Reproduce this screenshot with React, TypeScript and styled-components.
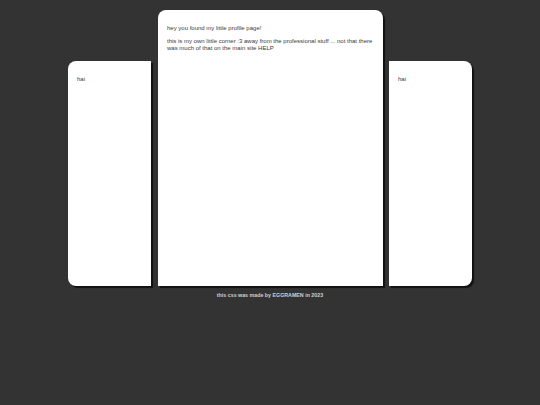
import styled, { createGlobalStyle } from "styled-components";

const GlobalStyle = createGlobalStyle`
  html, body {
    margin: 0;
    padding: 0;
    background: #333333;
  }
  body {
    font-family: "Liberation Sans", Arial, sans-serif;
  }
`;

const Page = styled.main`
  display: flex;
  flex-direction: column;
  align-items: center;
  padding-top: 10px;
`;

const Row = styled.div`
  display: flex;
  align-items: flex-end;
  gap: 6px;
`;

type Side = "left" | "center" | "right";

const radii: Record<Side, string> = {
  left: "8px 0 0 8px",
  center: "8px 8px 0 0",
  right: "0 8px 8px 0",
};

const Panel = styled.section<{ $side: Side }>`
  box-sizing: border-box;
  width: ${(p) => (p.$side === "center" ? "225px" : "83px")};
  height: ${(p) => (p.$side === "center" ? "276px" : "225px")};
  margin-right: ${(p) => (p.$side === "left" ? "1px" : "0")};
  padding: 9px;
  background: #ffffff;
  border-radius: ${(p) => radii[p.$side]};
  box-shadow: 2px 2px 1px #111;
  color: #3a3a3a;
  font-size: 6px;
  line-height: 7px;
`;

const Text = styled.p`
  margin: 6px 0;
`;

const Footer = styled.footer`
  margin-top: 6px;
  color: #cfcfcf;
  font-weight: bold;
  font-size: 5.3px;
  line-height: 7px;
`;

export default function App() {
  return (
    <>
      <GlobalStyle />
      <Page>
        <Row>
          <Panel $side="left">
            <Text>hai</Text>
          </Panel>
          <Panel $side="center">
            <Text>hey you found my little profile page!</Text>
            <Text>
              this is my own little corner :3 away from the professional stuff ... not that there was
              much of that on the main site HELP
            </Text>
          </Panel>
          <Panel $side="right">
            <Text>hai</Text>
          </Panel>
        </Row>
        <Footer>this css was made by EGGRAMEN in 2023</Footer>
      </Page>
    </>
  );
}
